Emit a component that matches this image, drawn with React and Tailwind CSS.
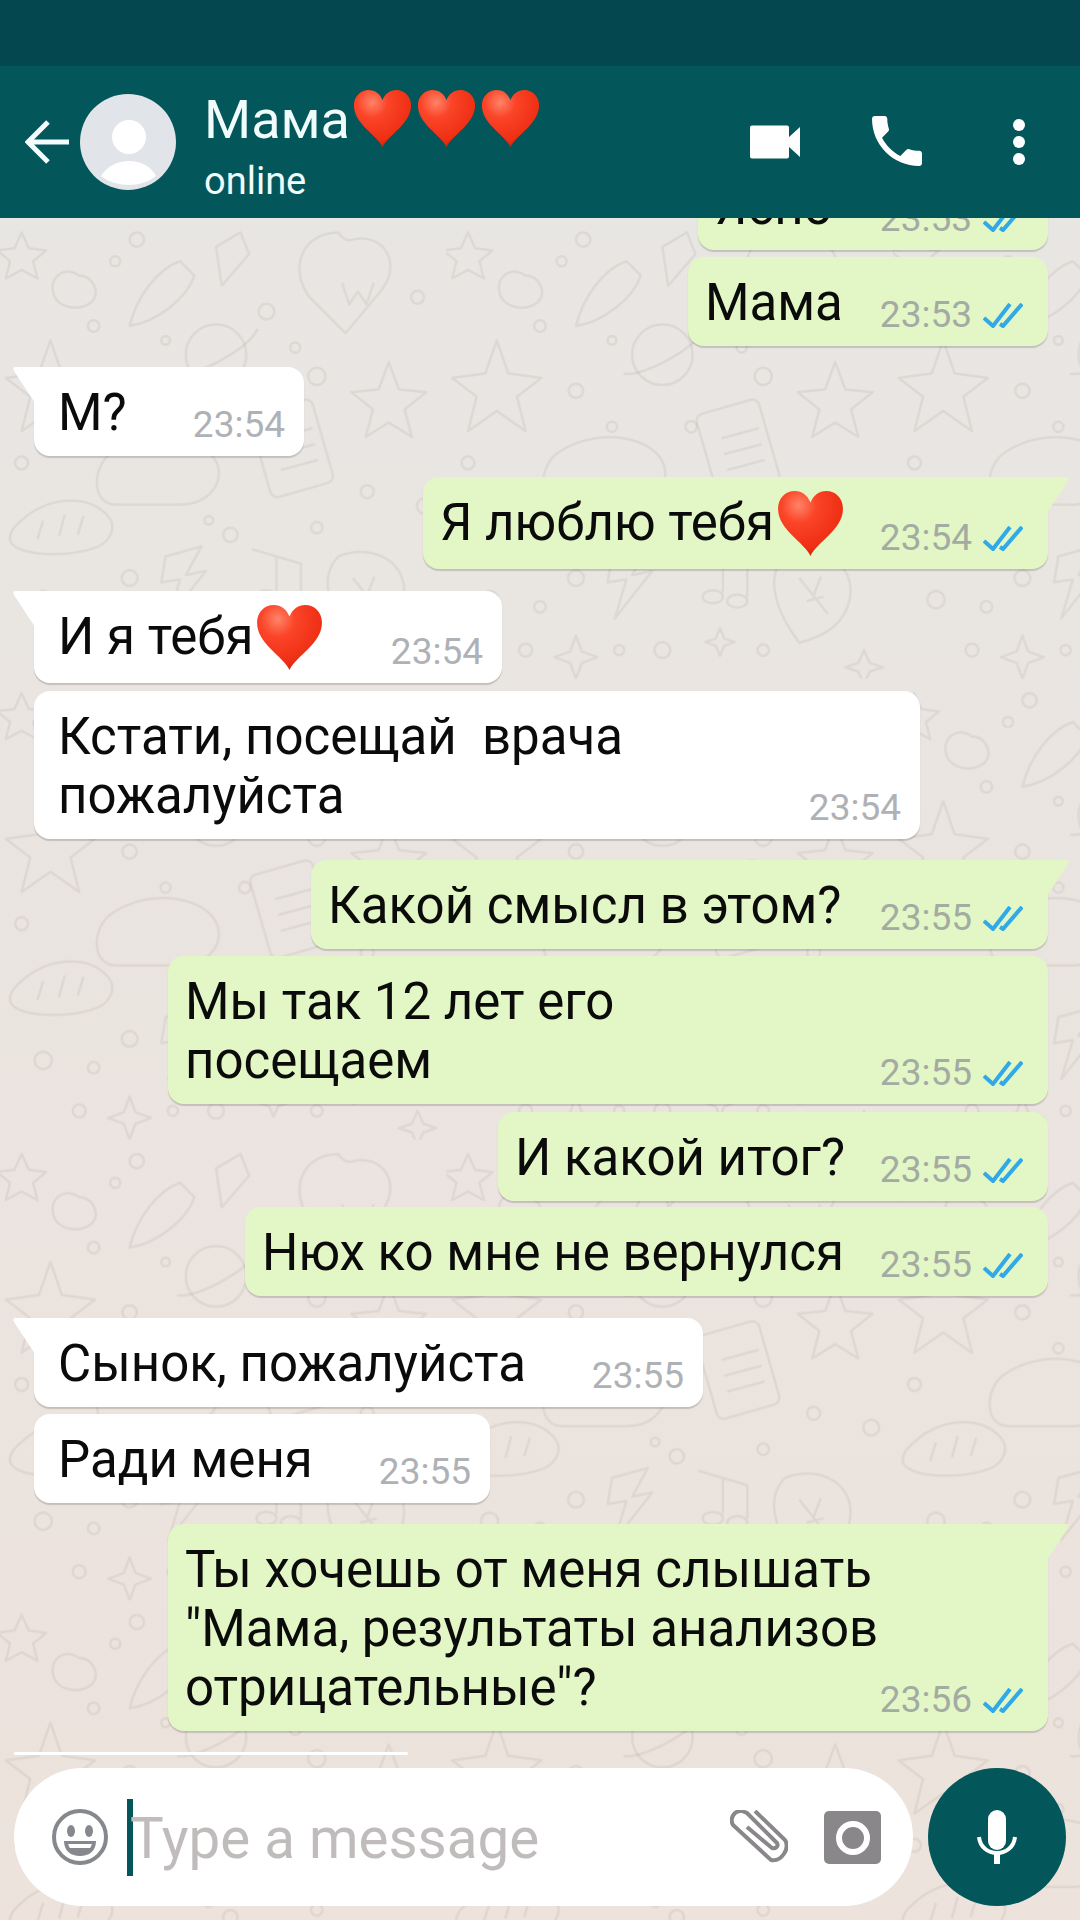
import React from 'react';

const messages = [
  { out: true, w: 'w-[350px]', mt: '-mt-[57px]', lines: ['Ясно'], time: '23:53' },
  { out: true, w: 'w-[360px]', mt: 'mt-[7px]', lines: ['Мама'], time: '23:53' },
  { out: false, w: 'w-[270px]', mt: 'mt-[21px]', lines: ['М?'], time: '23:54', tail: true },
  { out: true, w: 'w-[625px]', mt: 'mt-[21px]', lines: ['Я люблю тебя'], time: '23:54', tail: true, heart: true },
  { out: false, w: 'w-[468px]', mt: 'mt-[22px]', lines: ['И я тебя'], time: '23:54', tail: true, heart: true },
  { out: false, w: 'w-[886px]', mt: 'mt-[8px]', lines: ['Кстати, посещай  врача', 'пожалуйста'], time: '23:54' },
  { out: true, w: 'w-[737px]', mt: 'mt-[21px]', lines: ['Какой смысл в этом?'], time: '23:55', tail: true },
  { out: true, w: 'w-[880px]', mt: 'mt-[7px]', lines: ['Мы так 12 лет его', 'посещаем'], time: '23:55' },
  { out: true, w: 'w-[550px]', mt: 'mt-[8px]', lines: ['И какой итог?'], time: '23:55' },
  { out: true, w: 'w-[803px]', mt: 'mt-[6px]', lines: ['Нюх ко мне не вернулся'], time: '23:55' },
  { out: false, w: 'w-[669px]', mt: 'mt-[22px]', lines: ['Сынок, пожалуйста'], time: '23:55', tail: true },
  { out: false, w: 'w-[456px]', mt: 'mt-[7px]', lines: ['Ради меня'], time: '23:55' },
  { out: true, w: 'w-[880px]', mt: 'mt-[21px]', lines: ['Ты хочешь от меня слышать', '"Мама, результаты анализов', 'отрицательные"?'], time: '23:56', tail: true },
];

const Heart = ({ className }) => (
  <svg viewBox="0 0 64 64" className={className}>
    <defs>
      <radialGradient id="heartFill" cx="0.32" cy="0.22" r="0.9">
        <stop offset="0" stopColor="#ff8468" />
        <stop offset="0.3" stopColor="#fb4428" />
        <stop offset="0.75" stopColor="#ee2f14" />
        <stop offset="1" stopColor="#bf1c06" />
      </radialGradient>
    </defs>
    <path
      d="M32 63C26 50 1 38 1 18 1 8 8 1 17 1c7 0 12 4 15 11C35 5 40 1 47 1c9 0 16 7 16 17 0 20-25 32-31 45z"
      fill="url(#heartFill)"
    />
  </svg>
);

const Ticks = () => (
  <svg viewBox="0 0 40 25" className="w-[40px] h-[25px] ml-[11px]" fill="none" stroke="#2fa9e8" strokeWidth="4">
    <path d="M1 15l9 8L27 1" />
    <path d="M17 21l3 2L39 1" />
  </svg>
);

const Message = ({ m }) => (
  <div
    className={`relative shrink-0 ${m.w} ${m.mt} pt-[16px] pb-[14px] rounded-2xl shadow-[0_2px_1px_rgba(0,0,0,0.16)] flex justify-between ${
      m.out
        ? 'self-end bg-[#e2f7c5] pl-[17px] pr-[25px]'
        : 'self-start bg-white pl-[24px] pr-[19px]'
    } ${m.tail ? (m.out ? 'rounded-tr-none' : 'rounded-tl-none') : ''}`}
  >
    {m.tail && m.out && (
      <svg viewBox="0 0 22 36" className="absolute top-0 -right-[21px] w-[22px] h-[36px]">
        <path d="M0 0h19c3 0 3 2 2 4L0 36z" fill="#e2f7c5" />
      </svg>
    )}
    {m.tail && !m.out && (
      <svg viewBox="0 0 22 36" className="absolute top-0 -left-[21px] w-[22px] h-[36px]">
        <path d="M22 0H3C0 0 0 2 1 4l21 32z" fill="#ffffff" />
      </svg>
    )}
    <div className="text-[51px] leading-[59px] text-[#0b0b0b] whitespace-pre">
      {m.lines.map((line) => (
        <div key={line} className="flex items-start">
          {line}
          {m.heart && <Heart className="w-[67px] h-[67px] ml-[3px] -mt-[3px] -mb-[2px] shrink-0" />}
        </div>
      ))}
    </div>
    <div className={`self-end flex items-center -mb-[3px] text-[37px] leading-[40px] ${m.out ? 'text-[#a3aba3]' : 'text-[#aeb1b5]'}`}>
      <span>{m.time}</span>
      {m.out && <Ticks />}
    </div>
  </div>
);

const Doodles = () => (
  <svg className="absolute inset-0 w-full h-full" xmlns="http://www.w3.org/2000/svg">
    <defs>
      <pattern id="doodleTile" width="620" height="640" patternUnits="userSpaceOnUse" patternTransform="scale(0.72)">
        <g fill="none" stroke="#6f655c" strokeOpacity="0.1" strokeWidth="3.5" strokeLinejoin="round">
          <path d="M30 20l10 22 24 3-18 15 6 24-22-12-22 12 6-24-18-15 24-3z" />
          <path d="M110 80c-18-14-42 0-36 24 4 20 36 28 54 12 12-14 0-36-18-36z" />
          <path d="M250 60c-30 10-60 48-70 90 40-6 80-40 90-70z" />
          <path d="M300 40l34-20 12 30-38 44z" />
          <path d="M470 20c-50 0-70 50-40 90l50 50 50-60c30-40 0-80-40-70-6 2-14 0-20-10z" />
          <path d="M475 90l10 30 12-18 12 18 10-30" />
          <circle cx="300" cy="190" r="42" />
          <path d="M246 216c20 6 96-30 112-62" />
          <path d="M70 170l16 46 46 6-34 26 12 48-40-28-40 28 12-48-34-26 46-6z" />
          <path d="M150 330c50-40 130-30 150 8 14 28-10 60-50 60h-90c-30 0-34-44-10-68z" />
          <rect x="360" y="260" width="90" height="120" rx="10" transform="rotate(-16 405 320)" />
          <path d="M382 306l52-14M386 328l52-14M390 350l52-14" />
          <path d="M540 200l14 38 38 4-30 24 10 38-32-20-32 20 10-38-30-24 38-4z" />
          <path d="M30 420c30-30 90-40 120-6 14 16 2 40-24 46-44 12-104 8-112-12-2-10 6-20 16-28z" />
          <path d="M60 420l-8 26M90 412l-8 30M116 414l-8 26" />
          <path d="M230 470l50-14-22 40 28-6-52 66 16-54-26 4z" />
          <path d="M350 460l34 10v50M384 470l34 10v46" />
          <ellipse cx="370" cy="526" rx="14" ry="9" />
          <ellipse cx="404" cy="532" rx="14" ry="9" />
          <path d="M470 470c50-20 100 10 90 60-6 30-30 50-70 60-30-40-50-90-20-120z" />
          <path d="M490 500l40 50M520 498l-10 26M500 532l24-6" />
          <circle cx="190" cy="30" r="10" />
          <circle cx="160" cy="60" r="7" />
          <circle cx="370" cy="130" r="11" />
          <circle cx="410" cy="180" r="7" />
          <circle cx="180" cy="240" r="10" />
          <circle cx="230" cy="290" r="7" />
          <circle cx="440" cy="220" r="12" />
          <circle cx="320" cy="440" r="10" />
          <circle cx="180" cy="500" r="11" />
          <circle cx="130" cy="540" r="8" />
          <circle cx="60" cy="530" r="12" />
          <circle cx="440" cy="430" r="8" />
          <circle cx="590" cy="400" r="11" />
          <circle cx="580" cy="110" r="9" />
          <circle cx="300" cy="600" r="11" />
          <circle cx="440" cy="600" r="8" />
          <circle cx="130" cy="150" r="8" />
          <circle cx="230" cy="170" r="6" />
          <circle cx="340" cy="290" r="8" />
          <circle cx="510" cy="380" r="9" />
          <circle cx="290" cy="420" r="6" />
          <circle cx="240" cy="600" r="7" />
          <circle cx="30" cy="340" r="9" />
          <circle cx="110" cy="600" r="9" />
          <path d="M180 580l8 22 22 8-22 8-8 22-8-22-22-8 22-8z" />
          <path d="M580 600l8 18 18 6-18 6-8 18-8-18-18-6 18-6z" />
          <path d="M380 570l6 14 14 5-14 5-6 14-6-14-14-5 14-5z" />
        </g>
      </pattern>
    </defs>
    <rect width="100%" height="100%" fill="url(#doodleTile)" />
  </svg>
);

const App = () => (
  <div className="w-[1080px] h-[1920px] flex flex-col overflow-hidden bg-[#03565a] font-['Roboto',sans-serif]">
    <div className="h-[66px] shrink-0 bg-[#04474e]" />

    {/* Header */}
    <div className="h-[152px] shrink-0 flex items-center pl-[25px] bg-[#03565a] text-[#f0fbfb]">
      <svg viewBox="0 0 44 44" className="w-[44px] h-[44px]" fill="none" stroke="#f3fdfd" strokeWidth="5">
        <path d="M44 22H3M23 2L3 22l20 20" />
      </svg>
      <svg viewBox="0 0 96 96" className="w-[96px] h-[96px] ml-[11px]">
        <circle cx="48" cy="48" r="48" fill="#e1e5ea" />
        <circle cx="49" cy="43" r="17" fill="#ffffff" />
        <path d="M21 82c6-10 17-15 28-15s22 5 27 15c-7 6-18 9-27 9s-21-3-28-9z" fill="#ffffff" />
      </svg>
      <div className="ml-[28px] mt-[7px] flex flex-col">
        <div className="flex items-center gap-[5px] text-[54px] leading-[60px]">
          <span className="mr-[-2px]">Мама</span>
          <Heart className="w-[59px] h-[59px] -mt-[3px]" />
          <Heart className="w-[59px] h-[59px] -mt-[3px]" />
          <Heart className="w-[59px] h-[59px] -mt-[3px]" />
        </div>
        <div className="text-[38px] leading-[42px] mt-[10px]">online</div>
      </div>
      <div className="ml-auto flex items-center pr-[55px]">
        <svg viewBox="0 0 50 34" className="w-[50px] h-[34px]" fill="#ffffff">
          <rect width="39" height="33" y="0.5" rx="2" />
          <path d="M38 13L50 2v30L38 21z" />
        </svg>
        <svg viewBox="3 3 18 18" className="w-[50px] h-[50px] ml-[72px] -mt-[2px]" fill="#ffffff">
          <path d="M6.62 10.79c1.44 2.83 3.76 5.14 6.59 6.59l2.2-2.2c.27-.27.67-.36 1.02-.24 1.12.37 2.33.57 3.57.57.55 0 1 .45 1 1V20c0 .55-.45 1-1 1-9.39 0-17-7.61-17-17 0-.55.45-1 1-1h3.5c.55 0 1 .45 1 1 0 1.25.2 2.45.57 3.57.11.35.03.74-.25 1.02l-2.2 2.2z" />
        </svg>
        <div className="ml-[91px] flex flex-col gap-[5px]">
          <div className="w-[12px] h-[12px] rounded-full bg-white" />
          <div className="w-[12px] h-[12px] rounded-full bg-white" />
          <div className="w-[12px] h-[12px] rounded-full bg-white" />
        </div>
      </div>
    </div>

    {/* Chat */}
    <div className="relative flex-1 min-h-0 flex flex-col bg-gradient-to-b from-[#e8e6e3] to-[#ede2dc]">
      <Doodles />
      <div className="relative flex-1 min-h-0 overflow-hidden flex flex-col pl-[34px] pr-[32px]">
        {messages.map((m, i) => (
          <Message key={i} m={m} />
        ))}
      </div>

      <div className="relative w-[394px] h-[3px] ml-[14px] mb-[13px] bg-white rounded-full" />

      {/* Composer */}
      <div className="relative flex items-center pl-[14px] pr-[14px] pb-[14px] gap-[15px]">
        <div className="flex-1 h-[138px] rounded-full bg-white flex items-center pl-[38px] pr-[32px]">
          <svg viewBox="0 0 56 56" className="w-[56px] h-[56px]">
            <circle cx="28" cy="28" r="26" fill="none" stroke="#85888c" strokeWidth="4" />
            <ellipse cx="19" cy="22" rx="4" ry="6" fill="#85888c" />
            <ellipse cx="37" cy="22" rx="4" ry="6" fill="#85888c" />
            <path d="M12 32h32c0 10-7 15-16 15s-16-5-16-15z" fill="#85888c" />
            <path d="M16 35h24c-1 2-1 3-2 4H18c-1-1-1-2-2-4z" fill="#ffffff" />
          </svg>
          <div className="w-[6px] h-[77px] ml-[19px] bg-[#04565a]" />
          <span className="text-[56.5px] leading-[66px] -ml-[3px] mt-[4px] text-[#c0bcbc]">Type a message</span>
          <svg viewBox="0 0 58 54" className="w-[58px] h-[54px] ml-auto" fill="none" stroke="#8a878a" strokeWidth="4">
            <path d="M25 1l30 29c5 8-3 22-14 20L3 15C-1 8 5 0 12 1l5 2 30 30c2 4-2 6-5 5L17 17" />
          </svg>
          <svg viewBox="0 0 57 53" className="w-[57px] h-[53px] ml-[36px]">
            <rect width="57" height="53" rx="5" fill="#8a878a" />
            <circle cx="29" cy="27" r="14" fill="none" stroke="#ffffff" strokeWidth="6" />
          </svg>
        </div>
        <div className="w-[138px] h-[138px] rounded-full bg-[#03565a] flex items-center justify-center">
          <svg viewBox="0 0 40 54" className="w-[40px] h-[54px]" fill="none">
            <rect x="11" y="0" width="18" height="40" rx="9" fill="#ffffff" />
            <path d="M2 27c1 10 9 16 18 16s17-6 18-16" stroke="#ffffff" strokeWidth="4" />
            <path d="M20 42v12" stroke="#ffffff" strokeWidth="6" />
          </svg>
        </div>
      </div>
    </div>
  </div>
);

export default App;
